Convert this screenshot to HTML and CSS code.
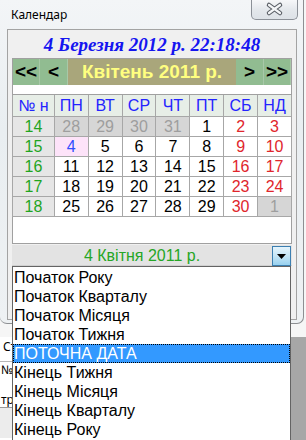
FILE: index.html
```html
<!DOCTYPE html>
<html lang="uk">
<head>
    <meta charset="UTF-8">
    <meta name="viewport" content="width=device-width, initial-scale=1.0">
    <title>Календар</title>
    <link rel="stylesheet" href="styles.css">
</head>
<body>
    <!-- the program window behind the calendar -->
    <div class="app">
        <div class="app-left">
            <div class="app-labels">
                <div class="app-label">Ст</div>
                <div class="app-row">№ А</div>
                <div class="app-row app-tall">тру</div>
            </div>
            <div class="app-band"></div>
        </div>
        <div class="app-right"></div>
    </div>

    <div class="window">
        <div class="titlebar">
            <span class="title">Календар</span>
            <div class="close">
                <svg width="45" height="19" viewBox="0 0 45 19">
                    <path d="M17 5 L28 13 M28 5 L17 13" stroke="#5a5f66" stroke-width="4.5" stroke-linecap="round"/>
                    <path d="M17 5 L28 13 M28 5 L17 13" stroke="#f4f6f8" stroke-width="2.2" stroke-linecap="round"/>
                </svg>
            </div>
        </div>

        <div class="panel">
            <div class="now">4 Березня 2012 р. 22:18:48</div>

            <div class="cal">
                <div class="nav">
                    <div class="nav-btn nav-wide">&lt;&lt;</div>
                    <div class="nav-btn">&lt;</div>
                    <div class="nav-month">Квітень 2011 р.</div>
                    <div class="nav-btn">&gt;</div>
                    <div class="nav-btn nav-wide">&gt;&gt;</div>
                </div>
                <div class="strip"></div>

                <table class="grid">
                    <tr class="head">
                        <td class="wk-head">№ н</td><td>ПН</td><td>ВТ</td><td>СР</td><td>ЧТ</td><td>ПТ</td><td>СБ</td><td>НД</td>
                    </tr>
                    <tr>
                        <td class="wk">14</td><td class="other">28</td><td class="other">29</td><td class="other">30</td><td class="other">31</td><td>1</td><td class="we">2</td><td class="we">3</td>
                    </tr>
                    <tr>
                        <td class="wk">15</td><td class="today">4</td><td>5</td><td>6</td><td>7</td><td>8</td><td class="we">9</td><td class="we">10</td>
                    </tr>
                    <tr>
                        <td class="wk">16</td><td>11</td><td>12</td><td>13</td><td>14</td><td>15</td><td class="we">16</td><td class="we">17</td>
                    </tr>
                    <tr>
                        <td class="wk">17</td><td>18</td><td>19</td><td>20</td><td>21</td><td>22</td><td class="we">23</td><td class="we">24</td>
                    </tr>
                    <tr>
                        <td class="wk">18</td><td>25</td><td>26</td><td>27</td><td>28</td><td>29</td><td class="we">30</td><td class="other">1</td>
                    </tr>
                </table>
                <div class="blank"></div>
            </div>

            <div class="combo">
                <div class="combo-text">4 Квітня 2011 р.</div>
                <div class="combo-btn">
                    <svg width="9" height="5" viewBox="0 0 9 5"><path d="M0 0 H9 L4.5 5 Z" fill="#000"/></svg>
                </div>
            </div>
        </div>
    </div>

    <ul class="droplist">
        <li>Початок Року</li>
        <li>Початок Кварталу</li>
        <li>Початок Місяця</li>
        <li>Початок Тижня</li>
        <li class="selected">ПОТОЧНА ДАТА</li>
        <li>Кінець Тижня</li>
        <li>Кінець Місяця</li>
        <li>Кінець Кварталу</li>
        <li>Кінець Року</li>
    </ul>
</body>
</html>
```

FILE: styles.css
```css
body {
    margin: 0;
    width: 306px;
    height: 440px;
    overflow: hidden;
    background: #f6f6f6;
    font-family: "Liberation Sans", Arial, sans-serif;
}

/* background application */
.app {
    display: flex;
    padding-top: 337px;
    height: 103px;
}
.app-left {
    width: 291px;
    background: #ffffff;
    font-family: "Noto Sans", sans-serif;
    font-size: 12px;
    color: #000;
}
.app-labels {
    width: 12px;
    overflow: hidden;
    white-space: nowrap;
}
.app-label {
    height: 24px;
    padding-left: 3px;
    line-height: 20px;
}
.app-row {
    border-top: 1px solid #b8b8b8;
    height: 31px;
    padding-left: 1px;
    line-height: 16px;
}
.app-tall {
    border-top: none;
    height: 14px;
    line-height: 14px;
}
.app-band {
    border-top: 1px solid #9a9a9a;
    height: 30px;
    background: #ececec;
}
.app-right {
    flex: 1;
    background: #a7a7a7;
}

/* calendar window */
.window {
    position: absolute;
    left: 0;
    top: 0;
    width: 303px;
    height: 323px;
    background: linear-gradient(180deg, #f3f5f7 0%, #e9eef1 40%, #eef1f3 100%);
    border-right: 1px solid #8d8f92;
    border-bottom: 1px solid #8d8f92;
    border-radius: 0 0 7px 7px;
}
.titlebar {
    display: flex;
    height: 29px;
}
.title {
    font-family: "Noto Sans", sans-serif;
    font-size: 12px;
    padding: 6px 0 0 11px;
    color: #000;
}
.close {
    margin-left: auto;
    margin-right: 5px;
    width: 45px;
    height: 19px;
    border: 1px solid #8b9097;
    border-top: none;
    border-radius: 0 0 5px 5px;
    background: linear-gradient(180deg, #f6f7f9 0%, #e4e8ec 50%, #dde2e7 100%);
}
.close svg {
    display: block;
}

.panel {
    width: 280px;
    height: 289px;
    margin-left: 7px;
    padding: 0 4px;
    border: 1px solid #a3a3a3;
    background: #f0f0f0;
}
.now {
    height: 28px;
    line-height: 29px;
    text-align: center;
    font-family: "Liberation Serif", "Times New Roman", serif;
    font-style: italic;
    font-weight: bold;
    font-size: 19px;
    color: #1515f0;
}

.cal {
    width: 278px;
    border: 1px solid #a0a0a0;
    background: #ffffff;
}
.nav {
    display: flex;
    height: 26px;
    line-height: 26px;
    font-weight: bold;
    font-size: 19px;
}
.nav-btn {
    width: 27px;
    background: #91bc91;
    color: #000;
    text-align: center;
    border-right: 1px solid #a8c8a8;
}
.nav-wide {
    width: 26px;
}
.nav-month {
    flex: 1;
    background: #a9a67b;
    color: #ffff80;
    text-align: center;
}
.strip {
    height: 9px;
    border-bottom: 1px solid #a0a0a0;
}

.grid {
    border-collapse: collapse;
    width: 280px;
    margin-left: -1px;
    font-size: 16px;
}
.grid td {
    width: 33px;
    height: 19px;
    padding: 0;
    border: 1px solid #a7a7a7;
    text-align: center;
    line-height: 19px;
    color: #000;
}
.grid tr:first-child td {
    border-top: none;
}
.grid .head td {
    height: 21px;
    background: #e7eee7;
    color: #2424ff;
    font-size: 16px;
}
.grid td.wk-head {
    width: 41px;
}
.grid td.wk {
    background: #e6e6e6;
    color: #1fa51f;
}
.grid td.other {
    background: #d6d6d6;
    color: #9e9e9e;
}
.grid td.we {
    color: #e0262c;
}
.grid td.today {
    background: #fde3f9;
    color: #2f4dff;
}
.blank {
    height: 26px;
}

.combo {
    display: flex;
    height: 20px;
    margin-top: 1px;
    background: #e3e3e3;
    border-bottom: 1px solid #d0d0d0;
}
.combo-text {
    flex: 1;
    text-align: center;
    line-height: 21px;
    font-size: 16px;
    color: #26a626;
}
.combo-btn {
    width: 17px;
    height: 18px;
    margin: 1px 1px 0 0;
    border: 1px solid #3c7fb1;
    background: linear-gradient(180deg, #e5f4fc 0%, #c4e5f6 50%, #98d1ef 100%);
    display: flex;
    align-items: center;
    justify-content: center;
}

/* open drop-down list */
.droplist {
    position: absolute;
    left: 12px;
    top: 266px;
    width: 277px;
    height: 180px;
    margin: 0;
    padding: 1px 0 0 0;
    list-style: none;
    background: #ffffff;
    border: 1px solid #646464;
    font-size: 16px;
}
.droplist li {
    height: 19px;
    line-height: 19px;
    padding-left: 1px;
    color: #000;
    white-space: nowrap;
}
.droplist li.selected {
    background: #3399ff;
    color: #ffffff;
    outline: 1px dotted #000;
    outline-offset: -1px;
}
```
